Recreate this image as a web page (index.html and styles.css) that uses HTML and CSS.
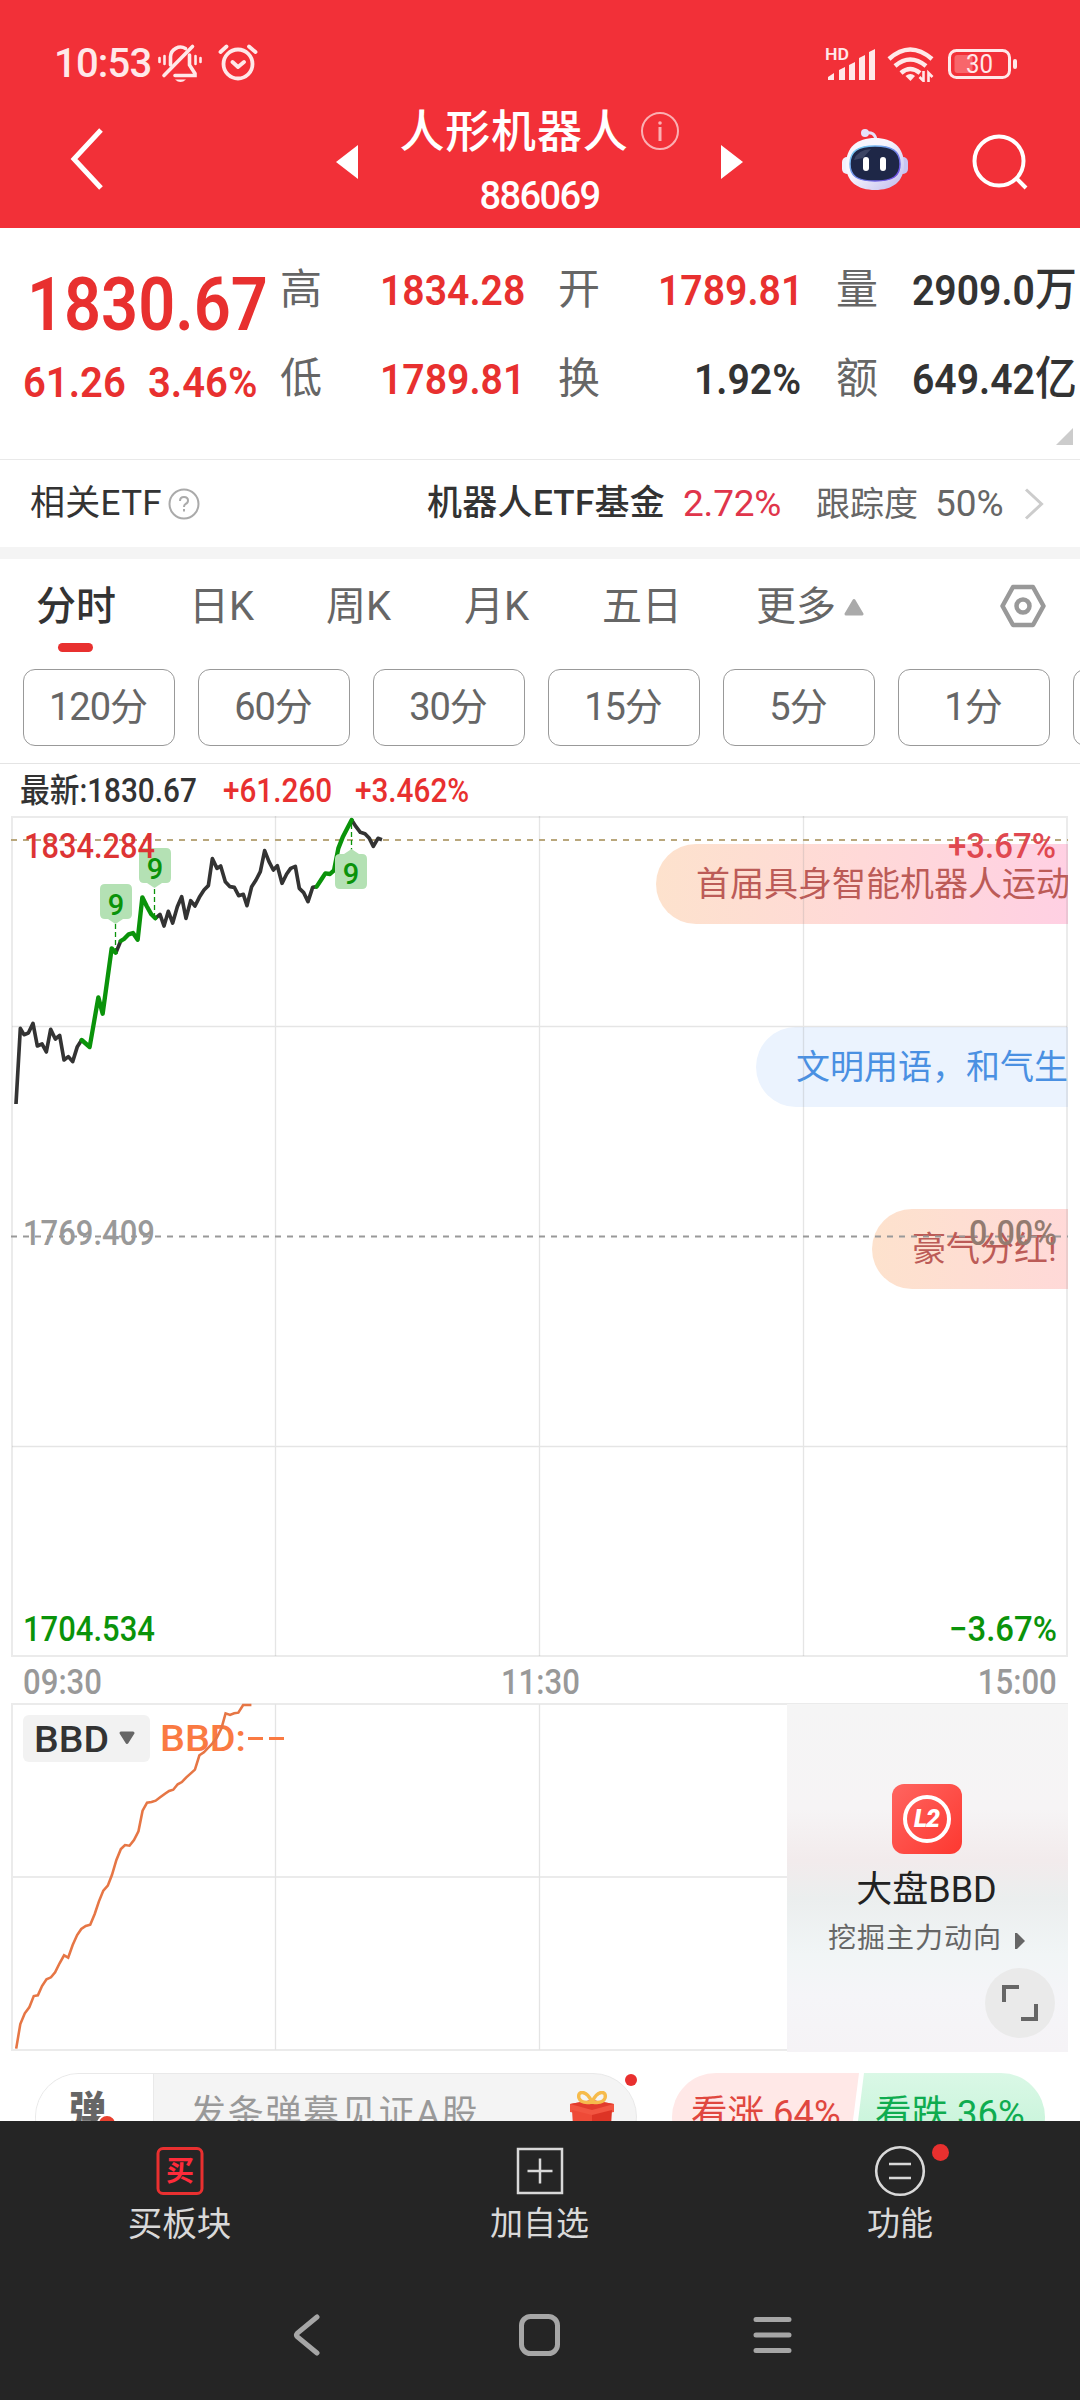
FILE: index.html
```html
<!DOCTYPE html>
<html lang="zh-CN">
<head>
  <meta charset="UTF-8">
  <meta name="viewport" content="width=device-width, initial-scale=1.0">
  <title>人形机器人 886069</title>
  <link rel="stylesheet" href="styles.css">
</head>
<body>
  <header class="header">
    <div class="status">
      <span class="clock">10:53</span>
      <svg class="ic-mute" width="44" height="40" viewBox="0 0 44 40" fill="none" stroke="#ffe8e9" stroke-width="3.6" stroke-linecap="round">
        <path d="M12.500 22V13.500a10 10 0 0 1 15-8M31.500 12v10l5.500 8.500v2H17"/>
        <path d="M34.500 3.500L6 32.500"/>
        <path d="M6.500 13v8M1.500 15v4M37.500 13v8M42.500 15v4" stroke-width="2.600"/>
        <path d="M17 36.500h11q-5.500 5-11 0z" fill="#ffe8e9" stroke="none"/>
      </svg>
      <svg class="ic-alarm" width="40" height="40" viewBox="0 0 40 40" fill="none" stroke="#ffe8e9" stroke-width="3.8" stroke-linecap="round" stroke-linejoin="round">
        <circle cx="20" cy="22" r="14.500"/>
        <path d="M14.500 20l5.500 5 6-5M2.500 10l6-5.500M31 4.500l6.500 5.500"/>
      </svg>
      <div class="status-right">
        <svg width="50" height="36" viewBox="0 0 50 36" fill="#ffe8e9">
          <text x="0" y="14" font-size="17" font-weight="600" textLength="24" lengthAdjust="spacingAndGlyphs">HD</text>
          <path d="M3 31l6-4v7H3zM14 24l6-3v13h-6zM24 19l6-3v18h-6zM34 12l6-3v25h-6zM44 6l6-3v31h-6z"/>
        </svg>
        <svg class="ic-wifi" width="48" height="36" viewBox="0 0 48 36" fill="none" stroke="#ffe8e9" stroke-width="4.500">
          <path d="M2 13q21-19 43 0M8 20q15-13 31 0M14 27q9-8 19 0"/>
          <path d="M18.500 30q5-4 9.500 0l-4.500 5z" fill="#ffe8e9" stroke="none"/>
          <path d="M36.500 25v10l-4-4M41.500 36V27l4 4" stroke-width="2.600"/>
        </svg>
        <svg class="ic-battery" width="70" height="32" viewBox="0 0 70 32">
          <rect x="1.500" y="2.500" width="60" height="27" rx="7" fill="none" stroke="#ffe8e9" stroke-width="3"/>
          <rect x="6.500" y="7" width="18" height="18" rx="3" fill="#f8666b"/>
          <rect x="65" y="11" width="4" height="10" rx="2" fill="#ffe8e9"/>
          <text x="18" y="24.500" font-size="25" fill="#ffe8e9" textLength="27" lengthAdjust="spacingAndGlyphs">30</text>
        </svg>
      </div>
    </div>

    <div class="navbar">
      <svg class="back" width="34" height="64" viewBox="0 0 34 64" fill="none" stroke="#fff" stroke-width="5">
        <path d="M31 3L4 32l27 29"/>
      </svg>
      <svg class="prev" width="22" height="34" viewBox="0 0 22 34"><path d="M22 0v34L0 17z" fill="#fff"/></svg>
      <div class="title-box">
        <div class="title">
          <h1>人形机器人</h1>
          <svg width="40" height="40" viewBox="0 0 40 40" fill="none" stroke="#fbb0b3" stroke-width="2">
            <circle cx="20" cy="20" r="18"/>
            <path d="M20 16v14" stroke-width="3"/>
            <circle cx="20" cy="12" r="1.800" fill="#fbb0b3" stroke="none"/>
          </svg>
        </div>
        <div class="code">886069</div>
      </div>
      <svg class="next" width="22" height="34" viewBox="0 0 22 34"><path d="M0 0v34l22-17z" fill="#fff"/></svg>
      <svg class="robot" width="68" height="64" viewBox="0 0 68 64">
        <defs>
          <linearGradient id="shell" x1="0" y1="0" x2="1" y2="1">
            <stop offset="0.4" stop-color="#f8f6fe"/>
            <stop offset="1" stop-color="#bdb8ec"/>
          </linearGradient>
          <linearGradient id="rim" x1="0" y1="0" x2="1" y2="1">
            <stop offset="0" stop-color="#7bdcf5"/>
            <stop offset="1" stop-color="#6a3ce0"/>
          </linearGradient>
        </defs>
        <path d="M24 5q10-2 11 7" fill="none" stroke="#e6e2fa" stroke-width="3"/>
        <circle cx="24" cy="5" r="4" fill="#e6e2fa"/>
        <rect x="1" y="29" width="10" height="17" rx="5" fill="#f2f0fd"/>
        <rect x="57" y="29" width="10" height="17" rx="5" fill="#c8c4f2"/>
        <path d="M34 10c18 0 29 9 29 27 0 17-12 25-29 25S5 54 5 37c0-18 11-27 29-27z" fill="url(#shell)"/>
        <path d="M34 18c17 0 25 5 25 18 0 12-7 17-25 17S9 48 9 36c0-13 8-18 25-18z" fill="#1e2747" stroke="url(#rim)" stroke-width="1.500"/>
        <path d="M13 32q3-10 17-11l-8 9z" fill="#3c4564"/>
        <rect x="22" y="29" width="6" height="14" rx="3" fill="#fff"/>
        <rect x="39" y="29" width="6" height="14" rx="3" fill="#fff"/>
      </svg>
      <svg class="search" width="58" height="58" viewBox="0 0 58 58" fill="none" stroke="#fff" stroke-width="4">
        <circle cx="27" cy="27" r="24.500"/>
        <path d="M44 44l10 10"/>
      </svg>
    </div>
  </header>

  <section class="quote">
    <div class="price">
      <div class="price-now"><span class="num">1830.67</span></div>
      <div class="price-diff"><span class="num">61.26</span><span class="num">3.46%</span></div>
    </div>
    <div class="stats">
      <label>高</label><span class="num red">1834.28</span>
      <label>开</label><span class="num red">1789.81</span>
      <label>量</label><span class="num">2909.0<i>万</i></span>
      <label>低</label><span class="num red">1789.81</span>
      <label>换</label><span class="num short">1.92%</span>
      <label>额</label><span class="num">649.42<i>亿</i></span>
    </div>
    <i class="corner"></i>
  </section>

  <section class="etf">
    <span class="etf-label">相关ETF</span>
    <svg width="32" height="32" viewBox="0 0 32 32" fill="none" stroke="#aaa" stroke-width="2">
      <circle cx="16" cy="16" r="14.500"/>
      <path d="M12 13q0-4 4-4t4 3.500q0 2.500-2.500 3.500-1.500 1-1.500 3M16 21v2.500"/>
    </svg>
    <b class="etf-name">机器人ETF基金</b>
    <span class="etf-rate">2.72%</span>
    <span class="etf-track">跟踪度</span>
    <span class="etf-pct">50%</span>
    <svg class="arrow" width="20" height="32" viewBox="0 0 20 32" fill="none" stroke="#ccc" stroke-width="3"><path d="M2 1.500L17.500 16 2 30.500"/></svg>
  </section>

  <nav class="tabs">
    <a class="active">分时</a>
    <a>日K</a>
    <a>周K</a>
    <a>月K</a>
    <a>五日</a>
    <a>更多<svg width="20" height="18" viewBox="0 0 20 18"><path d="M10 2.500L18 16H2z" fill="#aaa" stroke="#aaa" stroke-width="3" stroke-linejoin="round"/></svg></a>
    <svg class="setting" width="46" height="44" viewBox="0 0 46 44" fill="none" stroke="#999" stroke-width="4.500" stroke-linejoin="round">
      <path d="M13 3h20l10.500 19L33 41H13L2.500 22z"/>
      <circle cx="23" cy="22" r="6.500"/>
    </svg>
  </nav>

  <div class="minutes">
    <button>120分</button>
    <button>60分</button>
    <button>30分</button>
    <button>15分</button>
    <button>5分</button>
    <button>1分</button>
    <button></button>
  </div>

  <section class="latest">
    <span class="num">最新:1830.67</span>
    <span class="num red">+61.260</span>
    <span class="num red">+3.462%</span>
  </section>

  <section class="chart">
    <div class="danmu d1">首届具身智能机器人运动</div>
    <div class="danmu d2">文明用语，和气生</div>
    <div class="danmu d3">豪气分红!</div>
    <svg class="plot" width="1080" height="842" viewBox="0 0 1080 842">
      <g stroke="#999" stroke-opacity=".26" fill="none">
        <rect x="12" y="1" width="1055" height="839" stroke-opacity=".2" stroke-width="2"/>
        <path d="M275.500 0v840M539.500 0v840M803.500 0v840M12 210.500h1055M12 630.500h1055" stroke-width="1.300"/>
      </g>
      <path d="M11 24h1057" stroke="#b9a77c" stroke-width="2" stroke-dasharray="6 6"/>
      <path d="M11 420.500h1057" stroke="#999" stroke-width="2" stroke-dasharray="6 6"/>

      <!-- price line -->
      <g transform="translate(0 -16) scale(.33333)" fill="none" stroke-width="11" stroke="#333" stroke-linejoin="round">
        <polyline points="48,912 61,685 72,704 85,699 99,670 112,738 126,732 139,756 152,688 166,717 179,706 192,780 205,770 218,785 232,740 245,720"/>
        <polyline points="347,460 362,423"/>
        <polyline points="466,355 480,343 492,378 505,334 518,369 532,320 545,290 558,355 572,302 585,318 598,292 612,270 625,257 637,176 651,205 662,198 676,245 690,260 703,262 716,287 730,283 741,317 755,260 768,240 781,215 794,152 807,185 820,210 832,197 846,250 860,222 872,205 886,199 898,265 911,278 924,305 938,262 950,260"/>
        <polyline points="1055,60 1068,80 1081,97 1095,101 1108,115 1120,139 1134,115 1146,119"/>
        <g stroke="#0a930a" stroke-width="13" stroke-linecap="round">
          <polyline points="245,720 269,741 295,592 308,641 335,445 347,458"/>
          <polyline points="362,423 372,417 386,403 399,399 413,419 427,292 440,318 454,343 466,355"/>
          <polyline points="950,260 963,240 976,220 990,222 1002,211 1015,145 1028,112 1042,85 1055,60"/>
        </g>
      </g>

      <!-- nine-turn marks -->
      <g stroke="#0a930a" stroke-width="1.300" stroke-dasharray="5 3">
        <path d="M115.500 108v28M154.500 73v28M351.500 8v26"/>
      </g>
      <g fill="#b4e1b4">
        <path d="M105 68h22q5 0 5 5v25q0 5-5 5h-4l-7.500 5-7.500-5h-3q-5 0-5-5V73q0-5 5-5z"/>
        <path d="M144 32h22q5 0 5 5v25q0 5-5 5h-4l-7.500 5-7.500-5h-3q-5 0-5-5V37q0-5 5-5z"/>
        <path d="M340 38h4l7.500-5 7.500 5h3q5 0 5 5v25q0 5-5 5h-22q-5 0-5-5V43q0-5 5-5z"/>
      </g>
      <g class="nine">
        <text x="116" y="99">9</text>
        <text x="155" y="63">9</text>
        <text x="351" y="68">9</text>
      </g>

      <text class="up" x="24" y="42" textLength="131" lengthAdjust="spacingAndGlyphs">1834.284</text>
      <text class="up rate" x="948" y="42" textLength="108" lengthAdjust="spacingAndGlyphs">+3.67%</text>
      <text class="flat" x="23" y="429" textLength="132" lengthAdjust="spacingAndGlyphs">1769.409</text>
      <text class="flat zero" x="969" y="429" textLength="88" lengthAdjust="spacingAndGlyphs">0.00%</text>
      <text class="down" x="23" y="825" textLength="132" lengthAdjust="spacingAndGlyphs">1704.534</text>
      <text class="down" x="949" y="825" textLength="108" lengthAdjust="spacingAndGlyphs">−3.67%</text>
    </svg>
  </section>

  <div class="axis">
    <span class="num">09:30</span>
    <span class="num">11:30</span>
    <span class="num">15:00</span>
  </div>

  <section class="sub-chart">
    <svg width="1080" height="350" viewBox="0 0 1080 350">
      <g stroke="#ebebeb" stroke-width="2" fill="none">
        <rect x="12" y="2" width="1055" height="346"/>
        <path d="M12 175h1055"/>
        <path d="M275.500 2v346M539.500 2v346" stroke="#e4e4e4" stroke-width="1.300"/>
      </g>
      <rect x="23" y="13" width="127" height="47" rx="6" fill="#f2f2f2"/>
      <text x="34" y="50" font-size="37" fill="#333" font-weight="500" textLength="75" lengthAdjust="spacingAndGlyphs">BBD</text>
      <path d="M121 31h12l-6 9.500z" fill="#666" stroke="#666" stroke-width="3" stroke-linejoin="round"/>
      <text x="160" y="49" font-size="37" fill="#fa7a42" font-weight="500" textLength="86" lengthAdjust="spacingAndGlyphs">BBD:</text>
      <path d="M248 36.500h15M269 36.500h15" stroke="#fa7a42" stroke-width="3"/>
      <g transform="translate(0 -102) scale(.3444 .33333)">
        <polyline fill="none" stroke="#e67645" stroke-width="7.500" points="47,1346 59,1272 72,1240 85,1222 98,1188 110,1186 122,1158 135,1138 148,1132 160,1117 173,1090 186,1066 198,1073 211,1035 224,1005 236,987 249,978 262,974 275,942 287,905 300,872 313,857 325,825 338,780 351,747 363,735 376,737 389,720 402,694 414,632 427,608 440,606 452,602 465,592 478,582 491,573 503,569 516,553 528,546 541,532 554,520 566,509 579,466 592,457 604,444 617,430 630,412 643,385 655,340 668,345 680,340 692,338 706,315 730,315"/>
      </g>
    </svg>
    <div class="promo">
      <div class="l2"><span>L2</span></div>
      <div class="promo-title">大盘BBD</div>
      <div class="promo-sub">挖掘主力动向<svg width="10" height="16" viewBox="0 0 10 16"><path d="M0 0l2 0 8 8-8 8-2 0z" fill="#666"/></svg></div>
      <div class="expand">
        <svg width="36" height="36" viewBox="0 0 36 36" fill="none" stroke="#666" stroke-width="4"><path d="M2 17V2h15M34 19v15H19"/></svg>
      </div>
    </div>
  </section>

  <section class="talk">
    <div class="talk-input">
      <div class="talk-switch">弹<i></i></div>
      <span>发条弹幕见证A股</span>
      <svg width="44" height="50" viewBox="0 0 44 50">
        <path d="M0 13l22-4 22 4v8l-22 4-22-4z" fill="#f25541"/>
        <path d="M2 19l20 5v26H4z" fill="#ee4a37"/>
        <path d="M22 24l20-5-2 31H22z" fill="#dd3425"/>
        <path d="M0 13l22-4 22 4-22 6z" fill="#e23b2c"/>
        <path d="M22 11C16-2 7 0 9 7q2 6 13 4zM22 11C28-2 37 0 35 7q-2 6-13 4z" fill="none" stroke="#f6bb4c" stroke-width="3.500"/>
      </svg>
      <i class="dot"></i>
    </div>
    <div class="vote">
      <span class="vote-up">看涨 64%</span>
      <span class="vote-down">看跌 36%</span>
    </div>
  </section>

  <footer class="bottom">
    <div class="actions">
      <a>
        <svg width="52" height="52" viewBox="0 0 52 52">
          <rect x="4" y="3.500" width="44" height="45" rx="5" fill="none" stroke="#e93030" stroke-width="3"/>
          <text x="26" y="36" font-size="28" font-weight="700" text-anchor="middle" fill="#ff2b3a">买</text>
        </svg>
        <span>买板块</span>
      </a>
      <a>
        <svg width="52" height="52" viewBox="0 0 52 52" fill="none" stroke="#d9d9d9" stroke-width="2.500">
          <path d="M4 4h44v44H4zM13.500 26h25M26 13.500v25"/>
        </svg>
        <span>加自选</span>
      </a>
      <a>
        <svg width="52" height="52" viewBox="0 0 52 52" fill="none" stroke="#d9d9d9" stroke-width="2.600">
          <circle cx="26" cy="26" r="23.800"/>
          <path d="M15 19h22M15 33h22"/>
        </svg>
        <span>功能</span>
        <i class="dot"></i>
      </a>
    </div>
    <div class="sys-nav">
      <svg width="42" height="42" viewBox="0 0 42 42"><path d="M31 3L11.500 19q-2 2 0 4L31 39"/></svg>
      <svg width="42" height="42" viewBox="0 0 42 42"><rect x="2.500" y="2.500" width="36" height="37" rx="9"/></svg>
      <svg width="42" height="42" viewBox="0 0 42 42"><path d="M4 5.500h33M4 21h33M4 36.500h33"/></svg>
    </div>
  </footer>
</body>
</html>
```
FILE: styles.css
```css
:root {
  --red: #e8302f;
  --head: #f23038;
  --text: #333;
  --gray: #666;
  --line: #e9e9e9;
}

* {
  box-sizing: border-box;
}

body {
  margin: 0;
  width: 1080px;
  height: 2400px;
  overflow: hidden;
  display: flex;
  flex-direction: column;
  background: #fff;
  color: var(--text);
  font-family: Roboto, "Noto Sans CJK SC", sans-serif;
}

svg {
  display: block;
  flex-shrink: 0;
}

i {
  font-style: normal;
}

.num {
  display: inline-block;
  white-space: nowrap;
  font-weight: 600;
  transform: scaleX(.91);
  transform-origin: left center;
}

.red {
  color: var(--red);
}

/* header */
.header {
  height: 228px;
  flex-shrink: 0;
  background: var(--head);
  color: #fff;
}

.status {
  height: 100px;
  padding: 27px 62px 0 54px;
  display: flex;
  align-items: center;
}

.clock {
  width: 104px;
  font-size: 40px;
  font-weight: 500;
  letter-spacing: -0.8px;
  color: #ffe8e9;
}

.ic-mute {
  margin-top: -2px;
}

.ic-alarm {
  margin: -3px 0 0 16px;
}

.status-right {
  margin-left: auto;
  display: flex;
  align-items: center;
}

.ic-wifi {
  margin-left: 12px;
}

.ic-battery {
  margin-left: 13px;
}

.navbar {
  height: 128px;
  display: flex;
}

.back {
  margin: 27px 0 0 70px;
}

.prev {
  margin: 45px 0 0 232px;
}

.title-box {
  width: 363px;
  text-align: center;
}

.title {
  height: 62px;
  display: flex;
  align-items: center;
  justify-content: center;
}

.title h1 {
  margin: 4px 11px 0 0;
  font-size: 45px;
  line-height: 62px;
  font-weight: 500;
  letter-spacing: 0.8px;
}

.code {
  line-height: 69px;
  font-size: 38px;
  font-weight: 500;
  letter-spacing: -1.6px;
}

.next {
  margin: 45px 0 0 0;
}

.robot {
  margin: 28px 0 0 98px;
}

.search {
  margin: 34px 0 0 63px;
}

/* quote */
.quote {
  position: relative;
  height: 232px;
  flex-shrink: 0;
  display: flex;
  border-bottom: 1px solid var(--line);
}

.price {
  width: 280px;
  padding-top: 26px;
  color: var(--red);
}

.price-now {
  height: 101px;
  line-height: 101px;
  padding-left: 27px;
  font-size: 75px;
}

.price-now .num {
  transform: scaleX(.865);
}

.price-diff {
  padding-left: 23px;
  display: flex;
  line-height: 55px;
  font-size: 43px;
}

.price-diff .num {
  width: 125px;
  transform: scaleX(.93);
}

.stats {
  padding-top: 18px;
  display: grid;
  grid-template-columns: 100px 178px 100px 178px 76px 166px;
  grid-template-rows: 89px 89px;
  font-size: 43px;
  line-height: 88px;
}

.stats label {
  font-size: 42px;
  color: var(--gray);
}

.stats .short {
  margin-left: 36px;
}

.stats i {
  font-size: 46px;
  line-height: 1;
  font-weight: 500;
}

.corner {
  position: absolute;
  right: 7px;
  bottom: 14px;
  border-left: 17px solid transparent;
  border-bottom: 17px solid #ccc;
}

/* etf */
.etf {
  height: 99px;
  flex-shrink: 0;
  padding: 0 36px 0 30px;
  display: flex;
  align-items: center;
  font-size: 35px;
  line-height: 86px;
  border-bottom: 12px solid #f4f4f4;
}

.etf-label {
  width: 138px;
  letter-spacing: 0.3px;
}

.etf-name {
  width: 256px;
  margin-left: 227px;
  font-weight: 500;
  letter-spacing: 0.3px;
  white-space: nowrap;
}

.etf-rate {
  width: 133px;
  font-size: 37px;
  letter-spacing: -0.2px;
  color: #e0354b;
}

.etf-track {
  width: 119px;
  color: var(--gray);
  font-size: 34px;
}

.etf-pct {
  font-size: 37px;
  color: var(--gray);
}

.arrow {
  margin-left: auto;
}

/* tabs */
.tabs {
  height: 110px;
  flex-shrink: 0;
  position: relative;
  display: grid;
  grid-template-columns: 153px 137px 138px 138px 154px 244px 46px;
  padding-left: 36px;
}

.tabs a {
  position: relative;
  height: 96px;
  line-height: 96px;
  font-size: 40px;
  color: var(--gray);
  display: flex;
  align-items: center;
}

.tabs a svg {
  margin-left: 8px;
}

.tabs .active {
  color: var(--text);
  font-weight: 500;
}

.tabs .active::after {
  content: "";
  position: absolute;
  left: 22px;
  bottom: 3px;
  width: 35px;
  height: 9px;
  border-radius: 5px;
  background: var(--red);
}

.setting {
  margin-top: 25px;
}

.minutes {
  height: 95px;
  flex-shrink: 0;
  padding-left: 23px;
  display: flex;
  gap: 23px;
  overflow: hidden;
  border-bottom: 1px solid #e4e4e4;
}

.minutes button {
  width: 152px;
  height: 77px;
  flex-shrink: 0;
  padding: 0 2px 0 0;
  background: #fff;
  border: 1px solid #999;
  border-radius: 12px;
  font-family: inherit;
  font-size: 38px;
  line-height: 75px;
  letter-spacing: -1px;
  color: var(--gray);
}

.latest {
  height: 52px;
  flex-shrink: 0;
  padding-left: 20px;
  display: grid;
  grid-template-columns: 203px 132px 140px;
  font-size: 33px;
  line-height: 54px;
}

.latest .num {
  font-weight: 500;
  transform: scaleX(.9);
}

/* chart */
.chart {
  position: relative;
  height: 842px;
  flex-shrink: 0;
}

.plot {
  position: relative;
}

.chart text {
  font-size: 35px;
  font-weight: 500;
}

.up {
  fill: #dd3434;
}

.rate {
  fill: #e04850;
}

.flat {
  fill: #999;
}

.zero {
  fill: #937b70;
}

.down {
  fill: #0a930a;
}

.chart .nine text {
  font-size: 29px;
  text-anchor: middle;
  fill: #0a930a;
}

.danmu {
  position: absolute;
  right: 12px;
  height: 80px;
  line-height: 80px;
  padding-left: 40px;
  font-size: 34px;
  border-radius: 40px 0 0 40px;
  overflow: hidden;
  white-space: nowrap;
  color: #bc5b57;
}

.d1 {
  top: 28px;
  width: 412px;
  background: linear-gradient(90deg, #fde2cd, #ffd9d8 50%, #ffd0e3);
}

.d2 {
  top: 211px;
  width: 312px;
  color: #4a90e2;
  background: #ebf3fe;
}

.d3 {
  top: 393px;
  width: 196px;
  background: linear-gradient(90deg, #fde2cd, #ffd9d8);
}

.axis {
  height: 44px;
  flex-shrink: 0;
  padding: 5px 23px 0 23px;
  display: flex;
  justify-content: space-between;
  align-items: center;
  font-size: 35px;
  color: #999;
}

.axis .num {
  font-weight: 500;
  transform: scaleX(.89);
}

.axis .num:nth-child(2) {
  transform-origin: center;
}

.axis .num:last-child {
  transform-origin: right center;
}

/* BBD */
.sub-chart {
  position: relative;
  height: 350px;
  flex-shrink: 0;
}

.promo {
  position: absolute;
  right: 12px;
  top: 2px;
  width: 281px;
  height: 348px;
  padding-top: 80px;
  display: flex;
  flex-direction: column;
  align-items: center;
  background: linear-gradient(#f5f5f5, #f6f4f5 30%, #f2ebec 45%, #ebeeee 56%, #f1f5f6 72%, #f5f5f8 84%, #f5f3f6);
}

.l2 {
  width: 70px;
  height: 70px;
  margin-right: 2px;
  border-radius: 12px;
  display: flex;
  align-items: center;
  justify-content: center;
  background: linear-gradient(135deg, #ff6560, #fd3830);
}

.l2 span {
  width: 48px;
  height: 48px;
  border: 4px solid #fff;
  border-radius: 50%;
  text-align: center;
  font-size: 25px;
  line-height: 40px;
  font-weight: 900;
  font-style: italic;
  letter-spacing: -1px;
  color: #fff;
}

.promo-title {
  margin: 10px 2px 0 0;
  line-height: 52px;
  font-size: 36px;
  color: #222;
}

.promo-sub {
  display: flex;
  align-items: center;
  margin-right: 2px;
  line-height: 46px;
  font-size: 28px;
  letter-spacing: 1px;
  color: var(--gray);
}

.promo-sub svg {
  margin: 4px 0 0 13px;
}

.expand {
  position: absolute;
  right: 13px;
  bottom: 14px;
  width: 70px;
  height: 70px;
  border-radius: 50%;
  background: #eaeaea;
  display: flex;
  align-items: center;
  justify-content: center;
}

/* talk */
.talk {
  height: 69px;
  flex-shrink: 0;
  padding: 21px 35px 0;
  display: flex;
  justify-content: space-between;
  align-items: flex-start;
  clip-path: inset(0);
}

.talk-input {
  position: relative;
  width: 602px;
  height: 88px;
  display: flex;
  border: 1px solid #e9e9e9;
  border-radius: 44px;
  background: #f4f4f4;
  color: #999;
  font-size: 36px;
}

.talk-switch {
  position: relative;
  width: 118px;
  padding-left: 33px;
  border-right: 1px solid #e9e9e9;
  border-radius: 44px 0 0 44px;
  background: #fff;
  color: var(--gray);
  font-size: 37px;
  line-height: 73px;
  font-weight: 900;
}

.talk-switch i {
  position: absolute;
  left: 61px;
  top: 40px;
  width: 20px;
  height: 20px;
  border: 2px solid #fff;
  border-radius: 50%;
  background: #e8402f;
}

.talk-input span {
  width: 379px;
  padding-left: 36px;
  line-height: 80px;
  letter-spacing: 1.7px;
  white-space: nowrap;
}

.talk-input svg {
  margin: 17px 0 0 37px;
}

.dot {
  position: absolute;
  right: -1px;
  top: 0;
  width: 12px;
  height: 12px;
  border-radius: 50%;
  background: var(--red);
}

.vote {
  width: 373px;
  height: 88px;
  display: flex;
  border-radius: 44px;
  overflow: hidden;
  font-size: 36.5px;
  line-height: 82px;
  white-space: nowrap;
}

.vote-up {
  width: 189px;
  padding-left: 19px;
  color: #e0473f;
  background: #ffe8e7;
  clip-path: polygon(0 0, 100% 0, 94% 100%, 0 100%);
}

.vote-down {
  width: 194px;
  margin-left: -6px;
  padding-left: 22px;
  color: #0fac50;
  background: linear-gradient(#daf8e6, #c0f2d5);
  clip-path: polygon(11px 0, 100% 0, 100% 100%, 0 100%);
}

/* bottom */
.bottom {
  height: 279px;
  flex-shrink: 0;
  background: #252525;
}

.actions {
  height: 149px;
  padding-top: 24px;
  display: grid;
  grid-template-columns: 359px 361px 360px;
}

.actions a {
  position: relative;
  display: flex;
  flex-direction: column;
  align-items: center;
  color: #d9d9d9;
  font-size: 33px;
  line-height: 54px;
}

.actions a:first-child {
  font-size: 34.5px;
}

.actions .dot {
  right: 131px;
  top: -1px;
  width: 17px;
  height: 17px;
}

.sys-nav {
  display: flex;
  justify-content: center;
  gap: 191px;
  padding: 44px 1px 0 0;
}

.sys-nav svg {
  fill: none;
  stroke: #a6a6a6;
  stroke-width: 5;
  stroke-linecap: round;
}
```
